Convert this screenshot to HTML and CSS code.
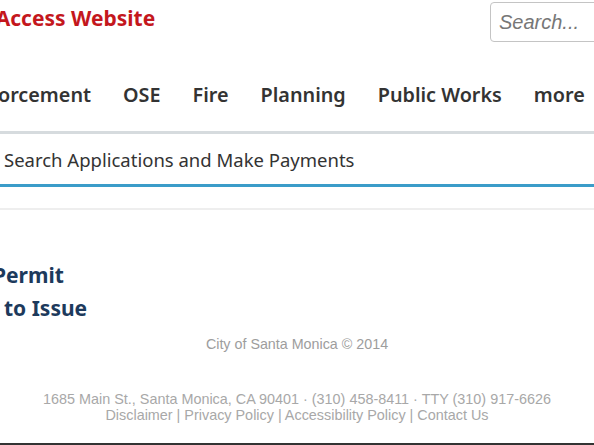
FILE: index.html
```html
<!DOCTYPE html>
<html lang="en">
<head>
<meta charset="utf-8">
<title>Online Permit Access Website</title>
<link rel="stylesheet" href="styles.css">
</head>
<body>
<div class="page">
  <header class="top">
    <div class="brand">Online Permit Access Website</div>
    <input class="search" type="text" placeholder="Search...">
  </header>
  <nav class="nav">
    <a class="nav-item first">Code Enforcement</a>
    <a class="nav-item">OSE</a>
    <a class="nav-item">Fire</a>
    <a class="nav-item">Planning</a>
    <a class="nav-item">Public Works</a>
    <a class="nav-item">more</a>
  </nav>
  <div class="tabs">
    <a class="tab active">Search Applications and Make Payments</a>
  </div>
  <div class="subbar"></div>
  <main class="content">
    <h2 class="stat">Permit</h2>
    <h2 class="stat second">to Issue</h2>
  </main>
  <footer class="footer">
    <p class="copy">City of Santa Monica &copy; 2014</p>
    <p class="addr">1685 Main St., Santa Monica, CA 90401 &middot; (310) 458-8411 &middot; TTY (310) 917-6626</p>
    <p class="links">Disclaimer | Privacy Policy | Accessibility Policy | Contact Us</p>
  </footer>
</div>
</body>
</html>
```
FILE: styles.css
```css
html, body {
  margin: 0;
  padding: 0;
  background: #fff;
}
.page {
  width: 594px;
  height: 445px;
  overflow: hidden;
  box-sizing: border-box;
  border-bottom: 2px solid #333;
}
.top {
  display: flex;
  justify-content: space-between;
  align-items: flex-start;
  height: 44px;
}
.brand {
  font-family: "Noto Sans", sans-serif;
  font-weight: 700;
  font-size: 21px;
  color: #c4171d;
  white-space: nowrap;
  margin-left: -155px;
  margin-top: 3px;
  line-height: 30px;
}
.search {
  margin-top: 2px;
  width: 120px;
  height: 40px;
  box-sizing: border-box;
  margin-right: -16px;
  border: 1px solid #c4c4c4;
  border-radius: 4px;
  padding: 0 8px;
  font-family: "Liberation Sans", Arial, sans-serif;
  font-size: 20px;
  font-style: italic;
  color: #666;
}
.search::placeholder {
  color: #777;
  font-style: italic;
}
.nav {
  display: flex;
  gap: 32px;
  height: 91px;
  align-items: center;
  border-bottom: 3px solid #d6dbde;
  box-sizing: border-box;
  margin-top: -1px;
  white-space: nowrap;
}
.nav-item {
  font-family: "Noto Sans", sans-serif;
  font-weight: 600;
  font-size: 19.8px;
  color: #333;
  padding-top: 14px;
}
.nav-item.first {
  margin-left: -87px;
}
.tabs {
  height: 53px;
  display: flex;
  align-items: center;
  border-bottom: 3px solid #3b9cc9;
  box-sizing: border-box;
  padding-left: 4px;
}
.tab {
  font-family: "Noto Sans", sans-serif;
  font-size: 18.5px;
  color: #333;
  padding-top: 1px;
}
.subbar {
  height: 21px;
  border-bottom: 2px solid #eeeeee;
}
.content {
  height: 118px;
  padding-top: 49px;
  box-sizing: border-box;
}
.stat {
  margin: 0;
  font-family: "Noto Sans", sans-serif;
  font-weight: 700;
  font-size: 21px;
  line-height: 33px;
  color: #1d3a5c;
  margin-left: -7px;
}
.stat.second {
  margin-left: 4px;
}
.footer {
  text-align: center;
  font-family: "Liberation Sans", Arial, sans-serif;
  color: #a8a8a8;
  font-size: 14.4px;
}
.footer p {
  margin: 0;
  line-height: 16px;
}
.copy {
  font-size: 14.3px;
  color: #9d9d9d;
  padding-top: 8px;
  padding-bottom: 39px;
}
```
